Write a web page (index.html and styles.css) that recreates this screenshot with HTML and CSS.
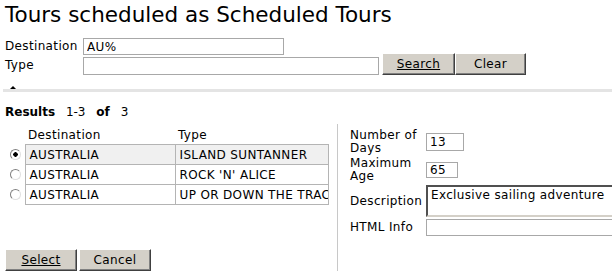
FILE: index.html
```html
<!DOCTYPE html>
<html lang="en">

<head>
    <meta charset="UTF-8">
    <title>Tours scheduled as Scheduled Tours</title>
    <link rel="stylesheet" href="styles.css">
</head>

<body>
    <h1 class="title">Tours scheduled as Scheduled Tours</h1>

    <form class="search">
        <label class="search-label" for="dest">Destination</label>
        <div class="search-row">
            <input type="text" id="dest" class="field field-dest" value="AU%">
        </div>
        <label class="search-label" for="type">Type</label>
        <div class="search-row">
            <input type="text" id="type" class="field field-type">
            <button type="button" class="btn btn-search"><u>Search</u></button>
            <button type="button" class="btn btn-clear">Clear</button>
        </div>
    </form>

    <div class="divider"><span class="divider-arrow"></span></div>

    <div class="results-head">
        <b>Results</b> <span>1-3</span> <b>of</b> <span>3</span>
    </div>

    <div class="main">
        <div class="list">
            <table class="tours">
                <colgroup>
                    <col class="col-pick">
                    <col class="col-dest">
                    <col class="col-type">
                </colgroup>
                <thead>
                    <tr>
                        <th></th>
                        <th>Destination</th>
                        <th>Type</th>
                    </tr>
                </thead>
                <tbody>
                    <tr class="selected">
                        <td class="pick"><input type="radio" name="tour" class="radio" checked></td>
                        <td class="cell">AUSTRALIA</td>
                        <td class="cell">ISLAND SUNTANNER</td>
                    </tr>
                    <tr>
                        <td class="pick"><input type="radio" name="tour" class="radio"></td>
                        <td class="cell">AUSTRALIA</td>
                        <td class="cell">ROCK 'N' ALICE</td>
                    </tr>
                    <tr>
                        <td class="pick"><input type="radio" name="tour" class="radio"></td>
                        <td class="cell">AUSTRALIA</td>
                        <td class="cell">UP OR DOWN THE TRAC</td>
                    </tr>
                </tbody>
            </table>

            <div class="actions">
                <button type="button" class="btn btn-wide"><u>Select</u></button>
                <button type="button" class="btn btn-wide">Cancel</button>
            </div>
        </div>

        <div class="detail">
            <label class="detail-label" for="days">Number of Days</label>
            <input type="text" id="days" class="field field-days" value="13">

            <label class="detail-label" for="age">Maximum Age</label>
            <input type="text" id="age" class="field field-age" value="65">

            <label class="detail-label" for="desc">Description</label>
            <textarea id="desc" class="desc">Exclusive sailing adventure</textarea>

            <label class="detail-label" for="info">HTML Info</label>
            <input type="text" id="info" class="field field-info">
        </div>
    </div>
</body>

</html>
```

FILE: styles.css
```css
html,
body {
    overflow: hidden;
}

body {
    margin: 0;
    padding: 0 0 0 5px;
    font-family: "DejaVu Sans", Verdana, sans-serif;
    font-size: 12px;
    letter-spacing: 0.35px;
    color: #000;
    background-color: #fff;
}

.title {
    margin: 0;
    padding-top: 1px;
    font-size: 21.5px;
    font-weight: normal;
    letter-spacing: 0;
    line-height: 27px;
}

/* search form */
.search {
    display: grid;
    grid-template-columns: 78px auto;
    grid-template-rows: 17px 18px;
    row-gap: 2px;
    margin-top: 10px;
}

.search-label {
    line-height: 17px;
}

.search-row {
    display: flex;
    align-items: flex-end;
}

.field {
    box-sizing: border-box;
    height: 17px;
    padding: 0 3px;
    border: 1px solid #a8a8a8;
    font: inherit;
    letter-spacing: inherit;
    color: #000;
    background-color: #fff;
}

.field-dest {
    width: 201px;
}

.field-type {
    width: 296px;
    height: 18px;
}

.btn {
    box-sizing: border-box;
    height: 22px;
    padding: 0;
    border: 1px solid;
    border-color: #fff #404040 #404040 #fff;
    box-shadow: inset -1px -1px 0 #808080;
    background-color: #d4d0c8;
    font: inherit;
    letter-spacing: inherit;
    color: #000;
}

.btn u {
    text-decoration: underline;
}

.btn-search {
    width: 73px;
    margin-left: 3px;
}

.btn-clear {
    width: 71px;
}

/* divider */
.divider {
    position: relative;
    height: 3px;
    margin: 14px 0 0 -2px;
    background-color: #e4e4e4;
}

.divider-arrow {
    position: absolute;
    left: 7px;
    top: -3px;
    width: 0;
    height: 0;
    border-left: 3px solid transparent;
    border-right: 3px solid transparent;
    border-bottom: 3px solid #000;
}

.results-head {
    margin-top: 12px;
    line-height: 17px;
    letter-spacing: 0;
    word-spacing: 7px;
}

/* results */
.main {
    display: flex;
    margin-top: 3px;
}

.list {
    flex-shrink: 0;
    width: 332px;
    padding-top: 3px;
}

.tours {
    table-layout: fixed;
    border-collapse: collapse;
    width: 323px;
}

.col-pick {
    width: 20px;
}

.col-dest {
    width: 150px;
}

.col-type {
    width: 153px;
}

.tours th {
    padding: 0 0 0 3px;
    height: 17px;
    font-weight: normal;
    text-align: left;
    line-height: 17px;
}

.tours td {
    height: 19px;
    padding: 0;
}

.tours .cell {
    padding-left: 4px;
    border: 1px solid #b4b4b4;
    white-space: nowrap;
    overflow: hidden;
}

.tours .selected .cell {
    background-color: #f0f0f0;
}

.pick {
    text-align: left;
    vertical-align: middle;
}

.radio {
    appearance: none;
    box-sizing: border-box;
    display: block;
    width: 11px;
    height: 11px;
    margin: 0 0 0 5px;
    border: 1px solid;
    border-color: #808080 #e0e0e0 #e0e0e0 #808080;
    border-radius: 50%;
    background-color: #fff;
}

.radio:checked {
    background: radial-gradient(circle, #000 0, #000 2px, #fff 2.5px);
}

.actions {
    display: flex;
    gap: 2px;
    margin-top: 44px;
}

.btn-wide {
    width: 72px;
}

/* detail panel */
.detail {
    flex: 1;
    min-width: 0;
    display: grid;
    grid-template-columns: 76px auto;
    align-items: center;
    align-content: start;
    row-gap: 2px;
    padding: 5px 0 0 12px;
    border-left: 1px solid #c8c8c8;
}

.detail-label {
    line-height: 13px;
}

.field-days {
    width: 38px;
    height: 18px;
}

.field-age {
    width: 32px;
    height: 16px;
}

.field-info {
    width: 200px;
}

.desc {
    box-sizing: border-box;
    width: 200px;
    height: 32px;
    padding: 1px 3px;
    border: 2px solid;
    border-color: #505050 #d4d0c8 #d4d0c8 #505050;
    font: inherit;
    letter-spacing: inherit;
    line-height: 14px;
    resize: none;
    overflow: hidden;
}
```
